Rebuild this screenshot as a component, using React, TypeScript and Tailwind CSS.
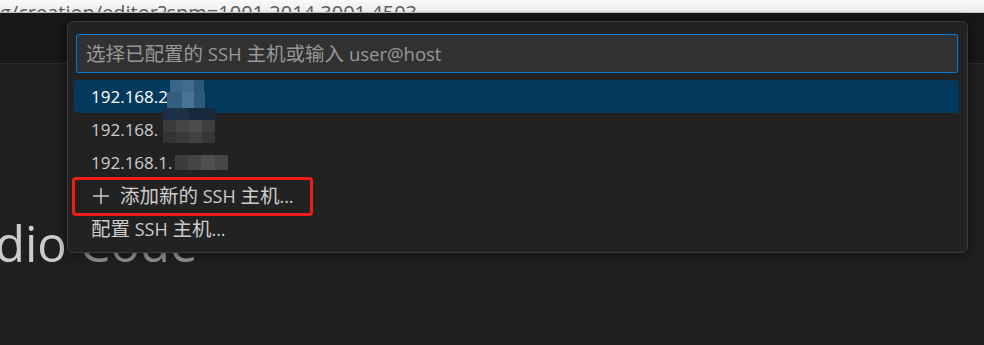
import React from "react";

const font = "font-['Segoe_UI','Open_Sans','Noto_Sans_CJK_SC',sans-serif]";

const hosts = ["192.168.2", "192.168.", "192.168.1."];

// pixelated blur over the redacted host numbers
const mosaic: [number, number, number, number, string][] = [
  [170, 80, 12, 12, "#3a6586"],
  [182, 80, 12, 12, "#416c8f"],
  [194, 80, 10, 12, "#2d5879"],
  [167, 92, 15, 16, "#355f80"],
  [182, 92, 12, 16, "#4a7496"],
  [194, 92, 11, 16, "#2f597a"],
  [163, 108, 26, 12, "#1d3146"],
  [189, 108, 26, 12, "#17283a"],
  [163, 120, 13, 12, "#3b3b3b"],
  [176, 120, 13, 12, "#454545"],
  [189, 120, 13, 12, "#4d4d4d"],
  [202, 120, 13, 12, "#3e3e3e"],
  [163, 132, 13, 11, "#333333"],
  [176, 132, 13, 11, "#393939"],
  [189, 132, 13, 11, "#414141"],
  [202, 132, 13, 11, "#363636"],
  [175, 155, 13, 15, "#3c3c3c"],
  [188, 155, 13, 15, "#444444"],
  [201, 155, 14, 15, "#4f4f4f"],
  [215, 155, 13, 15, "#474747"],
];

// CJK runs are set a touch larger than the latin text, like YaHei next to Segoe
const C = ({ children }: { children: React.ReactNode }) => <span className="text-[19.5px]">{children}</span>;

const AddIcon = () => (
  <svg width="18" height="18" viewBox="0 0 18 18" fill="none" className="shrink-0">
    <path d="M9 1v16M1 9h16" stroke="#cccccc" strokeWidth="1.5" />
  </svg>
);

export default function App() {
  return (
    <div className={`relative w-[984px] h-[345px] overflow-hidden bg-[#1f1f1f] ${font}`}>
      {/* browser address bar, mostly cropped */}
      <div className="h-[13px] overflow-hidden border-b border-[#c2c2c2] bg-gradient-to-b from-[#fafafa] to-[#ececec]">
        <div className="mt-[2px] whitespace-nowrap text-[20px] leading-[22px] text-[#5c5c5c]">
          g/creation/editor?spm=1001.2014.3001.4503
        </div>
      </div>

      {/* editor title bar */}
      <div className="h-[51px] border-b border-[#2b2b2b] bg-[#181818]" />

      {/* welcome page title */}
      <div className="mt-[155px] -ml-[5px] whitespace-nowrap text-[49px] leading-none">
        <span className="text-[#cccccc]">dio</span> <span className="text-[#8f8f8f]">Code</span>
      </div>

      {/* quick pick */}
      <div className="absolute left-[67px] top-[21px] w-[901px] rounded-[6px] border border-[#3a3a3a] bg-[#222222] pt-[12px] pb-[7px] pl-[8px] pr-[9px] shadow-[0_0_10px_2px_rgba(0,0,0,0.4)]">
        <div className="flex h-[39px] items-center whitespace-pre rounded-[2px] border border-[#0078d4] bg-[#313131] pl-[9px] text-[18.5px] text-[#989898]">
          <C>选择已配置的</C> SSH <C>主机或输入</C> user@host
        </div>
        <div className="-ml-[2px] -mr-[1px] mt-[7px] text-[18px]">
          {hosts.map((h, i) => (
            <div
              key={h}
              className={`flex h-[33px] items-center rounded-[4px] pl-[17px] text-[17px] ${
                i === 0 ? "bg-[#04395e] text-white" : "text-[#cccccc]"
              }`}
            >
              {h}
            </div>
          ))}
          <div className="flex h-[33px] items-center gap-[10px] whitespace-pre pl-[18px] text-[#cccccc]">
            <AddIcon />
            <span>
              <C>添加新的</C> SSH <C>主机</C>...
            </span>
          </div>
          <div className="flex h-[33px] items-center whitespace-pre pl-[17px] text-[#cccccc]">
            <span>
              <C>配置</C> SSH <C>主机</C>...
            </span>
          </div>
        </div>
      </div>

      {mosaic.map(([x, y, w, h, c], i) => (
        <div
          key={i}
          className="absolute"
          style={{ left: x, top: y, width: w, height: h, background: c }}
        />
      ))}

      {/* annotation box */}
      <div className="absolute left-[72px] top-[177px] h-[39px] w-[241px] rounded-[4px] border-[3px] border-[#ef1c1c]" />
    </div>
  );
}
